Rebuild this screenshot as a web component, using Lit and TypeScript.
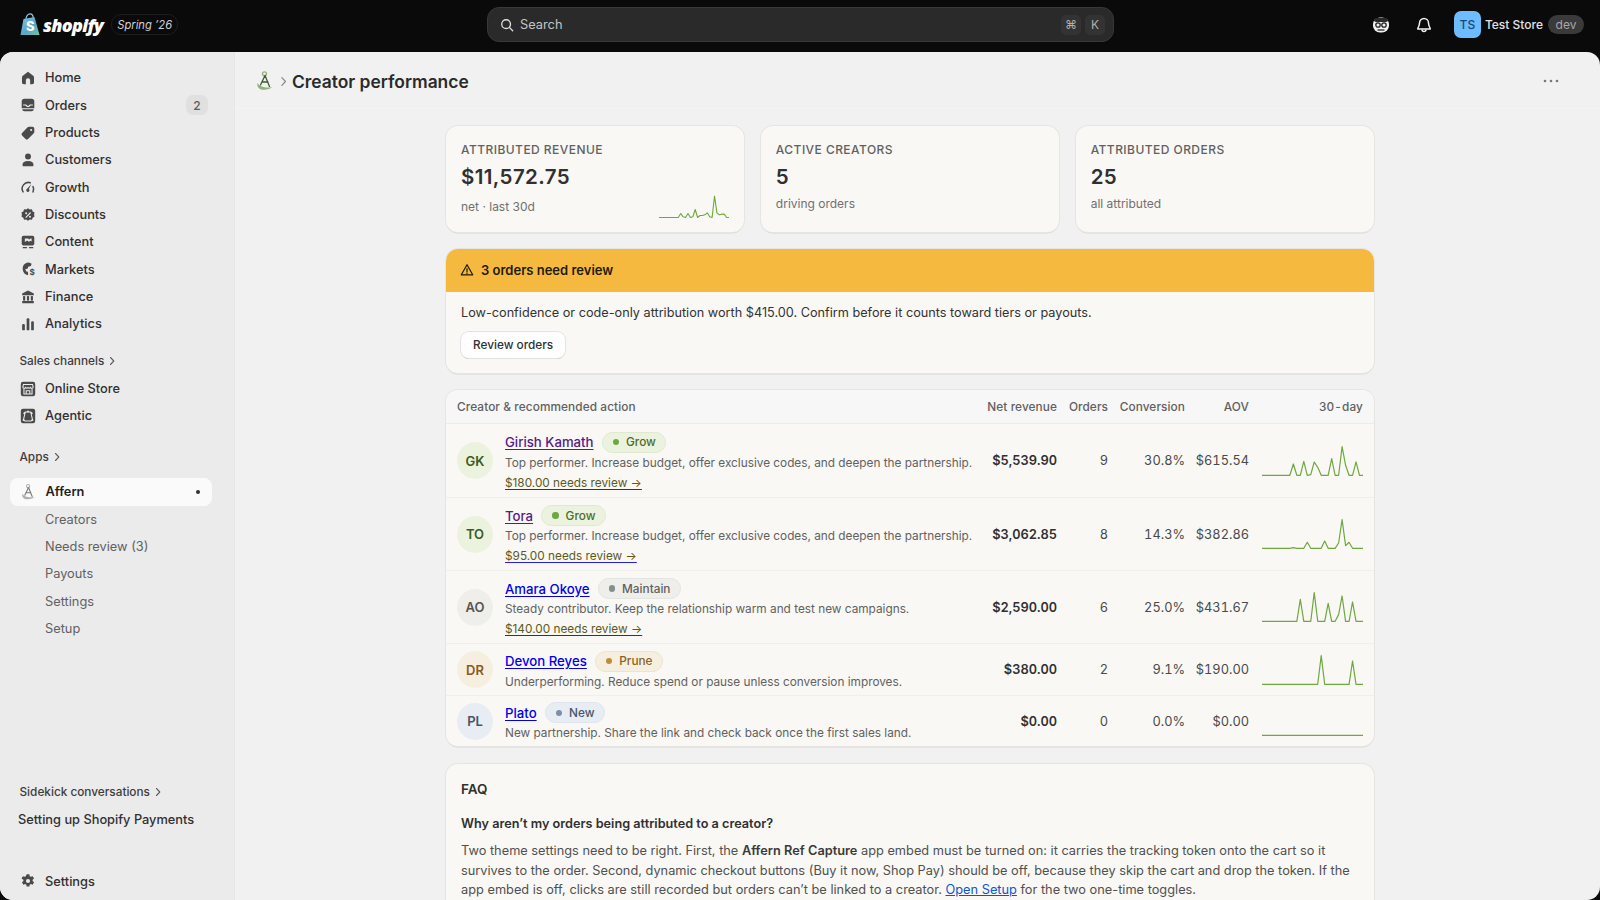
import { LitElement, html, css, svg } from "lit";
import { customElement } from "lit/decorators.js";

const ic = (body: unknown, cls = "ico") => html`<svg class=${cls} viewBox="0 0 20 20" fill="#4a4a4a">${body}</svg>`;

const icons: Record<string, unknown> = {
  home: svg`<path d="M10 3 4.200 7.600A2.400 2.400 0 0 0 3.300 9.500V15a2 2 0 0 0 2 2h2.300v-4.200a2.400 2.400 0 0 1 4.800 0V17h2.300a2 2 0 0 0 2-2V9.500a2.400 2.400 0 0 0-.9-1.900z"/>`,
  orders: svg`<path fill-rule="evenodd" d="M6 3h8a3 3 0 0 1 3 3v7.500H3V6a3 3 0 0 1 3-3zM4.600 9.500v1h2.200c.5 0 .8.3 1 .7.3.6.9 1 1.600 1h1.200c.7 0 1.300-.4 1.600-1 .2-.4.500-.7 1-.7h2.200v-1h-3c-.6 0-1 .4-1.300.9-.2.400-.5.600-.9.600H9.800c-.4 0-.7-.2-.9-.6-.3-.5-.7-.9-1.300-.9z"/><path d="M3.500 14.800h13a2.500 2.500 0 0 1-2.500 2.200H6a2.500 2.500 0 0 1-2.500-2.200z"/>`,
  products: svg`<path fill-rule="evenodd" d="M11 3h4a2 2 0 0 1 2 2v4a2 2 0 0 1-.6 1.400l-6.300 6.200a2 2 0 0 1-2.800 0l-3.900-3.900a2 2 0 0 1 0-2.800l6.200-6.300A2 2 0 0 1 11 3zm2.500 2.500a1.200 1.200 0 1 0 0 2.400 1.200 1.200 0 0 0 0-2.400z"/>`,
  customers: svg`<circle cx="10" cy="6.200" r="3.300"/><path d="M4 16v-1.200c0-2.300 2-3.800 6-3.800s6 1.500 6 3.800V16a1 1 0 0 1-1 1H5a1 1 0 0 1-1-1z"/>`,
  growth: svg`<path fill="none" stroke="#4a4a4a" stroke-width="1.700" stroke-linecap="round" d="M4.500 15.500A7 7 0 0 1 12.500 5.200M15.600 9.500a7 7 0 0 1 0 6"/><path d="M13.800 6.800 11 12.200a1.800 1.800 0 1 1-2-.2z"/>`,
  discounts: svg`<path fill-rule="evenodd" d="m10 2.500 2 1.400 2.400-.2.800 2.300 2.100 1.200-.6 2.300.6 2.300-2.100 1.200-.8 2.300-2.400-.2-2 1.400-2-1.400-2.400.2-.8-2.300-2.100-1.200.6-2.300-.6-2.300L4.800 6l.8-2.300L8 3.900zM12.500 6.800l-5.500 5.600.9.900 5.500-5.600zM8 7a1.100 1.100 0 1 0 0 2.200A1.100 1.100 0 0 0 8 7zm4.200 3.900a1.100 1.100 0 1 0 0 2.200 1.100 1.100 0 0 0 0-2.200z"/>`,
  content: svg`<path fill-rule="evenodd" d="M5 3h10a2 2 0 0 1 2 2v7a2 2 0 0 1-2 2H5a2 2 0 0 1-2-2V5a2 2 0 0 1 2-2zm1.500 3v4l2.500-1.800 2 1.500 2-1 1 .8V6h-1.500a1 1 0 1 1-2 0z"/><rect x="4" y="15.500" width="5" height="1.500" rx=".7"/><rect x="11" y="15.500" width="5" height="1.500" rx=".7"/>`,
  markets: svg`<path fill-rule="evenodd" d="M9.500 2.800a7.200 7.200 0 0 1 4.500 1.500l-.8 2.500-3 .6-.5 2-2.800.8 1.300 2.500 1.700.4.300 3.800A7.200 7.200 0 0 1 9.500 2.800z"/><text x="11.800" y="17" font-size="9" font-weight="700" font-family="Inter, sans-serif" fill="#4a4a4a">$</text>`,
  finance: svg`<path d="M10 2.800 3.500 6v2h13V6z"/><rect x="4.500" y="9" width="2.400" height="5"/><rect x="8.800" y="9" width="2.400" height="5"/><rect x="13.100" y="9" width="2.400" height="5"/><rect x="3.500" y="14.500" width="13" height="2.500" rx=".6"/>`,
  analytics: svg`<rect x="3.500" y="10" width="3" height="7" rx="1.300"/><rect x="8.500" y="3.500" width="3" height="13.500" rx="1.300"/><rect x="13.500" y="7" width="3" height="10" rx="1.300"/>`,
  store: svg`<rect x="2" y="2" width="16" height="16" rx="2.500"/><path fill="none" stroke="#ebebeb" stroke-width="1.200" d="M5 5h10l.8 3a1.600 1.600 0 0 1-3 .4 1.800 1.800 0 0 1-2.800 0 1.800 1.800 0 0 1-2.800 0 1.600 1.600 0 0 1-3-.4zM5.500 10v5.500h9V10M8 15.500V12h4v3.500"/>`,
  agentic: svg`<rect x="2" y="2" width="16" height="16" rx="2.500"/><path fill="none" stroke="#ebebeb" stroke-width="1.200" d="M7 5.500h6l2 8.500-1.500 1.500h-7L5 14zM5 7.500 7 5.500M15 7.500l-2-2"/><circle cx="5" cy="14.500" r="1" fill="#ebebeb"/><circle cx="15" cy="14.500" r="1" fill="#ebebeb"/><circle cx="10" cy="5" r="1" fill="#ebebeb"/>`,
  gear: svg`<path fill-rule="evenodd" d="M8.500 2.500h3l.4 2.100 1.300.7 2-.7 1.500 2.600-1.600 1.400v1.500l1.600 1.300-1.500 2.700-2-.8-1.300.8-.4 2.100h-3l-.4-2.100-1.300-.8-2 .8-1.500-2.700 1.600-1.300V8.600L2.800 7.200l1.500-2.600 2 .7 1.300-.7zM10 7.700a2.300 2.300 0 1 0 0 4.600 2.300 2.300 0 0 0 0-4.600z"/>`,
};

const logo = (cls: string, a: string, leaf: string) => html`<svg class=${cls} viewBox="0 0 20 22" fill="none">
  <circle cx="9.500" cy="3.800" r="2" stroke=${leaf} stroke-width="1.300"/>
  <path d="M10 5.500 5.500 15M10 5.500l4.500 11M7 12h6" stroke=${a} stroke-width="1.300" stroke-linecap="round"/>
  <path d="M2.500 13c-1 4 2 7 6.500 6.800 3.500-.1 6-1 8.500-2.800-3 .6-5.500.8-8 .2C6.500 16.600 4 15.500 2.500 13z" fill=${leaf}/>
</svg>`;

const chev = html`<svg class="chev" viewBox="0 0 8 10" fill="none"><path d="m2.500 1.500 3.300 3.500-3.300 3.500" stroke="#5f5f5f" stroke-width="1.100" stroke-linecap="round" stroke-linejoin="round"/></svg>`;

const sparkPts = (vals: Record<number, number>, w: number, base: number, k: number) =>
  Array.from({ length: 30 }, (_, i) => `${((i * w) / 29).toFixed(2)},${(base - (vals[i] ?? 0) * k).toFixed(2)}`).join(" ");

interface Row {
  ini: string; name: string; visited?: boolean; tag: string; desc: string; review?: string;
  rev: string; ord: string; conv: string; aov: string; spark: Record<number, number>; size: string;
}
const rows: Row[] = [
  { ini: "GK", name: "Girish Kamath", visited: true, tag: "grow", desc: "Top performer. Increase budget, offer exclusive codes, and deepen the partnership.", review: "$180.00 needs review →", rev: "$5,539.90", ord: "9", conv: "30.8%", aov: "$615.54", size: "r1",
    spark: { 9: 34, 12: 42, 14: 2, 15: 40, 16: 24, 20: 50, 23: 86, 24: 30, 27: 40 } },
  { ini: "TO", name: "Tora", visited: true, tag: "grow", desc: "Top performer. Increase budget, offer exclusive codes, and deepen the partnership.", review: "$95.00 needs review →", rev: "$3,062.85", ord: "8", conv: "14.3%", aov: "$382.86", size: "r3",
    spark: { 9: 2, 13: 18, 18: 22, 22: 16, 23: 86, 24: 8, 25: 18 } },
  { ini: "AO", name: "Amara Okoye", tag: "maintain", desc: "Steady contributor. Keep the relationship warm and test new campaigns.", review: "$140.00 needs review →", rev: "$2,590.00", ord: "6", conv: "25.0%", aov: "$431.67", size: "r3",
    spark: { 11: 66, 15: 86, 19: 54, 22: 20, 23: 76, 26: 58 } },
  { ini: "DR", name: "Devon Reyes", tag: "prune", desc: "Underperforming. Reduce spend or pause unless conversion improves.", rev: "$380.00", ord: "2", conv: "9.1%", aov: "$190.00", size: "r2",
    spark: { 17: 86, 26: 70 } },
  { ini: "PL", name: "Plato", tag: "new", desc: "New partnership. Share the link and check back once the first sales land.", rev: "$0.00", ord: "0", conv: "0.0%", aov: "$0.00", size: "r5", spark: {} },
];
const tagLabel: Record<string, string> = { grow: "Grow", maintain: "Maintain", prune: "Prune", new: "New" };

@customElement("app-root")
export class AppRoot extends LitElement {
  static styles = css`
    :host { display: block; width: 1600px; height: 900px; overflow: hidden; background: #0a0a0a;
      font-family: Inter, "Liberation Sans", sans-serif; color: #303030; font-size: 13px; }
    .top { height: 52px; box-sizing: border-box; padding-bottom: 3px; display: flex; align-items: center; color: #e3e3e3; }
    .brand { width: 487px; display: flex; align-items: center; padding-left: 20px; box-sizing: border-box; flex: none; }
    .bag { width: 20px; height: 24px; flex: none; }
    .word { font-family: "Open Sans", sans-serif; font-style: italic; font-weight: 800; font-size: 18px; color: #fff; margin-left: 3px; letter-spacing: -.7px; }
    .spring { margin-left: 8px; height: 19px; padding: 0 5px; border: 1px solid #1d1d1d; border-radius: 10px; display: flex; align-items: center; font-style: italic; font-size: 11.200px; color: #d0d0d0; }
    .search { width: 627px; height: 35px; box-sizing: border-box; background: #2a2a2a; border: 1px solid #383838; border-radius: 12px; display: flex; align-items: center; padding: 0 8px 0 12px; color: #c4c4c4; font-size: 12.800px; flex: none; }
    .search svg { width: 14px; height: 14px; margin-right: 6px; flex: none; }
    .search .grow { flex: 1; }
    .kbd { width: 20px; height: 20px; border-radius: 5px; background: #333; display: flex; align-items: center; justify-content: center; font-size: 12px; color: #b0b0b0; margin-left: 4px; }
    .tr { flex: 1; display: flex; align-items: center; justify-content: flex-end; padding-right: 16px; }
    .face { width: 18px; height: 18px; margin-right: 25px; }
    .bell { width: 18px; height: 18px; margin-right: 21px; }
    .ts { width: 27px; height: 27px; border-radius: 7px; background: #6cbcff; color: #174a70; display: flex; align-items: center; justify-content: center; font-size: 12px; font-weight: 500; }
    .sname { margin-left: 4px; font-size: 12px; font-weight: 500; color: #e3e3e3; }
    .dev { margin-left: 5px; height: 19px; width: 36px; border-radius: 9.500px; background: #3a3a3a; color: #a8a8a8; font-size: 12px; display: flex; align-items: center; justify-content: center; }

    .panel { height: 848px; display: flex; border-radius: 13px; overflow: hidden; background: #f1f1f1; }
    .side { width: 235px; flex: none; box-sizing: border-box; background: #ebebeb; padding: 12.300px 0 5.300px; display: flex; flex-direction: column; border-right: 1px solid #e6e6e6; }
    .spacer { flex: 1; }
    .item { height: 27.330px; display: flex; align-items: center; padding-left: 18.500px; font-size: 12.800px; font-weight: 500; color: #303030; flex: none; box-sizing: border-box; }
    .ico { width: 18px; height: 18px; margin-right: 8.500px; flex: none; }
    .badge { margin-left: auto; margin-right: 26px; width: 22px; height: 20px; border-radius: 7px; background: #e0e0e0; color: #5c5c5c; font-size: 12px; display: flex; align-items: center; justify-content: center; }
    .head { height: 27.330px; display: flex; align-items: center; padding-left: 19.500px; font-size: 11.800px; font-weight: 500; color: #3d3d3d; flex: none; }
    .chev { width: 8px; height: 10px; margin-left: 4px; }
    .h1 { margin-top: 10px; }
    .h2 { margin-top: 13.300px; }
    .active { margin: 8px 22px 0 10px; padding-left: 9.500px; background: #fafafa; border-radius: 8px; font-weight: 600; color: #1f1f1f; }
    .active i { margin-left: auto; margin-right: 12px; width: 4px; height: 4px; border-radius: 50%; background: #303030; }
    .aff { width: 17px; height: 18px; margin-right: 9px; flex: none; }
    .sub { padding-left: 45px; font-weight: 400; color: #616161; }
    .conv { padding-left: 18px; color: #303030; }
    .last { margin-top: 34.600px; }

    .main { flex: 1; min-width: 0; overflow: hidden; display: flex; flex-direction: column; }
    .pagehead { height: 57px; flex: none; box-sizing: border-box; border-bottom: 1px solid #f4f4f4; display: flex; align-items: center; padding: 2px 41px 0 20px; }
    .plogo { width: 20px; height: 22px; flex: none; }
    .pchev { width: 9px; height: 11px; margin: 0 4px 0 4px; }
    .title { font-size: 17.400px; font-weight: 600; color: #2a2a2a; flex: 1; }
    .dots { width: 16px; height: 4px; }
    .content { width: 928px; margin: 17px 0 0 211px; display: flex; flex-direction: column; gap: 16.500px; }
    .card { background: #f9f8f5; border-radius: 12px; box-shadow: 0 0 0 1px #e6e5e2, 0 1.500px 0 #d6d6d6; box-sizing: border-box; }
    .stats { display: grid; grid-template-columns: repeat(3, 1fr); gap: 16.500px; }
    .stat { height: 106px; padding: 15.500px 15px 0; position: relative; }
    .lab { font-size: 12px; font-weight: 500; letter-spacing: .45px; color: #616161; line-height: 15px; }
    .val { font-size: 20.500px; font-weight: 600; color: #303030; line-height: 26px; margin-top: 7px; letter-spacing: .4px; }
    .note { font-size: 12px; color: #707070; line-height: 16px; margin-top: 6.500px; }
    .note.low { margin-top: 9.500px; }
    .sp { position: absolute; right: 14px; bottom: 13px; width: 71px; height: 24px; }
    .alert { overflow: hidden; height: 124px; }
    .ahead { height: 43px; background: #f5b93f; display: flex; align-items: center; padding-left: 14px; font-weight: 600; font-size: 13px; color: #1f1a0c; }
    .ahead svg { width: 14px; height: 14px; margin-right: 7px; }
    .abody { padding: 12px 15px; color: #333; font-size: 12.700px; line-height: 18px; }
    .btn { display: inline-flex; align-items: center; height: 26px; padding: 0 12px; margin-top: 10px; background: #fff; border-radius: 8px; box-shadow: 0 0 0 1px #e3e3e3, 0 1px 0 #b8b8b8; font-size: 11.800px; font-weight: 500; color: #303030; }
    .table { overflow: hidden; margin: 1px 0; }
    .row { display: grid; grid-template-columns: 1fr 76px 51px 77px 64px 114px; padding: 0 11px; align-items: center; border-bottom: 1px solid #f0efec; box-sizing: border-box; font-size: 12.800px; color: #4a4a4a; }
    .row:last-child { border-bottom: 0; }
    .thead { height: 34px; background: #f7f7f7; border-bottom: 1px solid #ececec; font-size: 11.800px; font-weight: 500; color: #616161; letter-spacing: .1px; }
    .r1 { height: 74px; } .r3 { height: 73px; } .r2 { height: 52.400px; } .r5 { height: 50px; }
    .num { text-align: right; white-space: nowrap; font-variant-numeric: tabular-nums; }
    .rev { font-weight: 600; color: #303030; }
    .who { display: flex; align-items: center; gap: 12px; min-width: 0; padding-top: 1px; }
    .av { width: 36px; height: 37px; border-radius: 50%; flex: none; display: flex; align-items: center; justify-content: center; font-size: 13px; font-weight: 600; margin-top: -1px; }
    .av.grow { background: #ebf3df; color: #3c5a1e; }
    .av.maintain { background: #eeeeea; color: #555; }
    .av.prune { background: #f6efdf; color: #8a5a1e; }
    .av.new { background: #e8edf4; color: #475569; }
    .txt { min-width: 0; white-space: nowrap; padding-top: 2px; }
    .nm { display: flex; align-items: center; height: 21px; gap: 8px; }
    .nm a { font-size: 13.200px; font-weight: 500; color: #0000ee; text-decoration: underline; text-underline-offset: 2px; }
    .nm a.vis { color: #551a8b; }
    .pill { height: 21px; box-sizing: border-box; border-radius: 11px; display: inline-flex; align-items: center; padding: 0 9.500px 0 10px; font-size: 11.800px; font-weight: 500; gap: 7px; border: 1px solid; }
    .pill i { width: 6.500px; height: 6.500px; border-radius: 50%; }
    .pill.grow { background: #ebf3df; border-color: #dfe9cf; color: #4d6b2a; }
    .pill.grow i { background: #6ea83f; }
    .pill.maintain { background: #eeeeea; border-color: #e4e4e0; color: #5f5f5f; }
    .pill.maintain i { background: #85908a; }
    .pill.prune { background: #f6efdf; border-color: #eee3cc; color: #8a6326; }
    .pill.prune i { background: #c48a3c; }
    .pill.new { background: #e8edf4; border-color: #dfe5ee; color: #475569; }
    .pill.new i { background: #7c8ea8; }
    .desc { font-size: 11.800px; line-height: 20px; color: #616161; }
    .rvw { display: block; font-size: 11.800px; line-height: 20px; color: #5e5a1c; text-decoration: underline; text-decoration-color: #2222dd; text-underline-offset: 2px; }
    .line { display: block; width: 101px; height: 32px; justify-self: end; }
    .faq { padding: 16px 15px 20px; }
    .faq h2 { margin: 0; font-size: 13.500px; font-weight: 600; color: #303030; line-height: 18px; }
    .faq h3 { margin: 17.500px 0 0; font-size: 12.700px; font-weight: 600; color: #303030; line-height: 18px; }
    .faq p { margin: 7.500px 0 0; font-size: 12.790px; line-height: 19.700px; color: #505050; }
    .faq p b { font-weight: 600; color: #3a3a3a; }
    .faq p a { color: #0a55d6; text-decoration: underline; }
  `;

  private nav(key: string, label: string) {
    return html`<div class="item">${ic(icons[key])}${label}</div>`;
  }

  render() {
    return html`
      <div class="top">
        <div class="brand">
          <svg class="bag" viewBox="0 0 20 24">
            <defs><linearGradient id="bg" x1="0" y1="0" x2="1" y2="1"><stop offset="0" stop-color="#7fc4e8"/><stop offset=".55" stop-color="#5aa6c8"/><stop offset="1" stop-color="#6fc79a"/></linearGradient></defs>
            <path d="M6 6C6 3 8 .8 10 .8s3.200 2 3.200 4.500" fill="none" stroke="#9cc4dc" stroke-width="1.200"/>
            <path d="M3.500 6 14.500 4 19.500 22 .5 22z" fill="url(#bg)"/>
            <text x="6" y="18" font-family="Inter, sans-serif" font-weight="800" font-size="13" fill="#fff">S</text>
          </svg>
          <span class="word">shopify</span>
          <span class="spring">Spring ’26</span>
        </div>
        <div class="search">
          <svg viewBox="0 0 16 16" fill="none" stroke="#e0e0e0" stroke-width="1.500" stroke-linecap="round"><circle cx="7" cy="7" r="5"/><path d="m11 11 3.500 3.500"/></svg>
          <span class="grow">Search</span>
          <span class="kbd">⌘</span><span class="kbd">K</span>
        </div>
        <div class="tr">
          <svg class="face" viewBox="0 0 18 18"><rect x="1" y="1.500" width="16" height="15" rx="7" fill="#f2f2f2"/><rect x="2" y="2" width="14" height="4" rx="2" fill="#2a2a2a"/><circle cx="6" cy="9" r="2.200" fill="none" stroke="#222" stroke-width="1.300"/><circle cx="12" cy="9" r="2.200" fill="none" stroke="#222" stroke-width="1.300"/><path d="M5.500 14h7" stroke="#222" stroke-width="1.300"/></svg>
          <svg class="bell" viewBox="0 0 18 18" fill="none" stroke="#f0f0f0" stroke-width="1.500" stroke-linejoin="round"><path d="M9 2.500a4.500 4.500 0 0 0-4.500 4.500c0 3-1.800 5-1.800 6h12.600c0-1-1.800-3-1.800-6A4.500 4.500 0 0 0 9 2.500z"/><path d="M7 13.500a2 2 0 0 0 4 0"/></svg>
          <span class="ts">TS</span>
          <span class="sname">Test Store</span>
          <span class="dev">dev</span>
        </div>
      </div>
      <div class="panel">
        <nav class="side">
          ${this.nav("home", "Home")}
          <div class="item">${ic(icons.orders)}Orders<span class="badge">2</span></div>
          ${this.nav("products", "Products")}
          ${this.nav("customers", "Customers")}
          ${this.nav("growth", "Growth")}
          ${this.nav("discounts", "Discounts")}
          ${this.nav("content", "Content")}
          ${this.nav("markets", "Markets")}
          ${this.nav("finance", "Finance")}
          ${this.nav("analytics", "Analytics")}
          <div class="head h1">Sales channels ${chev}</div>
          ${this.nav("store", "Online Store")}
          ${this.nav("agentic", "Agentic")}
          <div class="head h2">Apps ${chev}</div>
          <div class="item active">${logo("aff", "#777", "#b0b0b0")}Affern<i></i></div>
          <div class="item sub">Creators</div>
          <div class="item sub">Needs review (3)</div>
          <div class="item sub">Payouts</div>
          <div class="item sub">Settings</div>
          <div class="item sub">Setup</div>
          <div class="spacer"></div>
          <div class="head">Sidekick conversations ${chev}</div>
          <div class="item conv">Setting up Shopify Payments</div>
          <div class="item last">${ic(icons.gear)}Settings</div>
        </nav>
        <main class="main">
          <header class="pagehead">
            ${logo("plogo", "#3e5a35", "#8fb27a")}
            <svg class="pchev" viewBox="0 0 8 10" fill="none"><path d="m2.500 1.500 3.300 3.500-3.300 3.500" stroke="#8a8a8a" stroke-width="1.100" stroke-linecap="round" stroke-linejoin="round"/></svg>
            <span class="title">Creator performance</span>
            <svg class="dots" viewBox="0 0 16 4" fill="#777"><circle cx="2" cy="2" r="1.300"/><circle cx="8" cy="2" r="1.300"/><circle cx="14" cy="2" r="1.300"/></svg>
          </header>
          <div class="content">
            <section class="stats">
              <div class="card stat">
                <div class="lab">ATTRIBUTED REVENUE</div>
                <div class="val">$11,572.75</div>
                <div class="note low">net · last 30d</div>
                <svg class="sp" viewBox="0 0 71 24" fill="none"><polyline points=${sparkPts({ 9: 12, 10: 2, 12: 12, 14: 2, 15: 24, 17: 6, 18: 6, 19: 8, 20: 14, 21: 2, 23: 64, 24: 14, 25: 8, 26: 10, 27: 10 }, 70, 22.500, 1 / 3)} stroke="#6ea83f" stroke-width="1.100" stroke-linejoin="round"/></svg>
              </div>
              <div class="card stat">
                <div class="lab">ACTIVE CREATORS</div>
                <div class="val">5</div>
                <div class="note">driving orders</div>
              </div>
              <div class="card stat">
                <div class="lab">ATTRIBUTED ORDERS</div>
                <div class="val">25</div>
                <div class="note">all attributed</div>
              </div>
            </section>
            <section class="card alert">
              <div class="ahead">
                <svg viewBox="0 0 16 16" fill="none" stroke="#1f1a0c" stroke-width="1.400" stroke-linejoin="round"><path d="M8 2 1.500 13.500h13z"/><path d="M8 6.500v3.500M8 11.500v.4" stroke-linecap="round"/></svg>
                3 orders need review
              </div>
              <div class="abody">
                Low-confidence or code-only attribution worth $415.00. Confirm before it counts toward tiers or payouts.<br />
                <span class="btn">Review orders</span>
              </div>
            </section>
            <section class="card table">
              <div class="row thead">
                <span>Creator &amp; recommended action</span>
                <span class="num">Net revenue</span><span class="num">Orders</span><span class="num">Conversion</span><span class="num">AOV</span><span class="num">30-day</span>
              </div>
              ${rows.map(
                (r) => html`<div class="row ${r.size}">
                  <div class="who">
                    <span class="av ${r.tag}">${r.ini}</span>
                    <div class="txt">
                      <div class="nm"><a class=${r.visited ? "vis" : ""}>${r.name}</a><span class="pill ${r.tag}"><i></i>${tagLabel[r.tag]}</span></div>
                      <div class="desc">${r.desc}</div>
                      ${r.review ? html`<a class="rvw">${r.review}</a>` : ""}
                    </div>
                  </div>
                  <span class="num rev">${r.rev}</span><span class="num">${r.ord}</span><span class="num">${r.conv}</span><span class="num">${r.aov}</span>
                  <svg class="line" viewBox="0 0 101 32" fill="none"><polyline points=${sparkPts(r.spark, 101, 30.300, 1 / 3)} stroke="#6ea83f" stroke-width="1.200" stroke-linejoin="round"/></svg>
                </div>`
              )}
            </section>
            <section class="card faq">
              <h2>FAQ</h2>
              <h3>Why aren’t my orders being attributed to a creator?</h3>
              <p>Two theme settings need to be right. First, the <b>Affern Ref Capture</b> app embed must be turned on: it carries the tracking token onto the cart so it survives to the order. Second, dynamic checkout buttons (Buy it now, Shop Pay) should be off, because they skip the cart and drop the token. If the app embed is off, clicks are still recorded but orders can’t be linked to a creator. <a>Open Setup</a> for the two one-time toggles.</p>
            </section>
          </div>
        </main>
      </div>
    `;
  }
}
